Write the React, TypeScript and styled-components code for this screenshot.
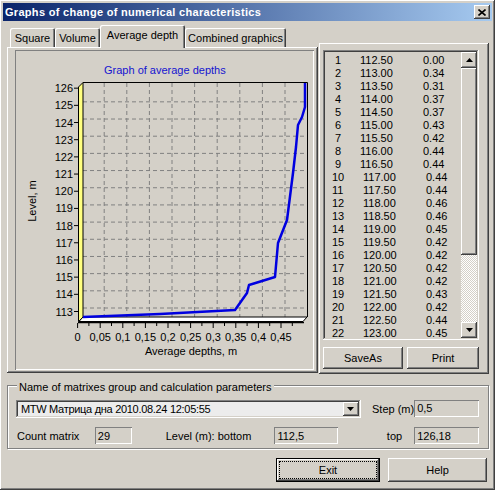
import React from 'react';
import styled, { createGlobalStyle, css } from 'styled-components';

const GlobalStyle = createGlobalStyle`
  body {
    margin: 0;
    background: #d4d0c8;
  }
  * {
    box-sizing: border-box;
  }
`;

const raised = css`
  box-shadow: inset -1px -1px #404040, inset 1px 1px #ffffff,
    inset -2px -2px #808080, inset 2px 2px #d4d0c8;
`;

const sunken = css`
  box-shadow: inset -1px -1px #ffffff, inset 1px 1px #808080,
    inset -2px -2px #d4d0c8, inset 2px 2px #404040;
`;

const Window = styled.div`
  width: 495px;
  height: 490px;
  padding: 3px;
  background: #d4d0c8;
  ${raised};
  display: flex;
  flex-direction: column;
  font-family: 'Liberation Sans', Arial, sans-serif;
  font-size: 11px;
  color: #000;
`;

const TitleBar = styled.div`
  height: 18px;
  display: flex;
  align-items: center;
  justify-content: space-between;
  padding: 0 2px 0 2px;
  background: linear-gradient(to right, #0a246a, #a6caf0);
`;

const TitleText = styled.div`
  color: #fff;
  font-weight: bold;
  font-size: 11px;
  letter-spacing: 0.3px;
`;

const CloseButton = styled.div`
  width: 16px;
  height: 14px;
  background: #d4d0c8;
  ${raised};
  display: flex;
  align-items: center;
  justify-content: center;
`;

const Content = styled.div`
  display: flex;
  margin-top: 4px;
  height: 349px;
`;

const TabControl = styled.div`
  margin-left: 4px;
  width: 311px;
  display: flex;
  flex-direction: column;
`;

const TabStrip = styled.div`
  height: 22px;
  display: flex;
  align-items: flex-end;
  padding-left: 3px;
`;

const Tab = styled.div<{ $active?: boolean; $width: number }>`
  width: ${(p) => p.$width}px;
  height: ${(p) => (p.$active ? 23 : 19)}px;
  margin-bottom: ${(p) => (p.$active ? -1 : 0)}px;
  position: relative;
  z-index: ${(p) => (p.$active ? 2 : 1)};
  background: #d4d0c8;
  border-radius: 2px 2px 0 0;
  box-shadow: inset 1px 1px #ffffff, inset -1px 0 #404040, inset -2px 0 #808080;
  display: flex;
  justify-content: center;
  padding-top: 4px;
  white-space: nowrap;
`;

const Sheet = styled.div`
  height: 326px;
  padding: 3px 4px 3px 8px;
  ${raised};
`;

const ChartPanel = styled.div`
  width: 299px;
  height: 320px;
  box-shadow: inset 1px 1px #808080, inset -1px -1px #ffffff;
`;

const RightPanel = styled.div`
  margin-top: 18px;
  margin-left: 1px;
  width: 170px;
  height: 331px;
  padding: 7px 10px 0 4px;
  ${raised};
`;

const ListBox = styled.div`
  height: 290px;
  padding: 2px;
  ${sunken};
  display: flex;
`;

const Rows = styled.div`
  flex: 1;
  padding-top: 2px;
`;

const Row = styled.div<{ $wide: boolean }>`
  height: 13px;
  line-height: 13px;
  display: grid;
  grid-template-columns: ${(p) => (p.$wide ? '31px 63px auto' : '25px 63px auto')};
  padding-left: ${(p) => (p.$wide ? 7 : 10)}px;
  white-space: nowrap;
`;

const ScrollBar = styled.div`
  width: 16px;
  display: flex;
  flex-direction: column;
`;

const ScrollButton = styled.div<{ $height: number }>`
  height: ${(p) => p.$height}px;
  background: #d4d0c8;
  ${raised};
  display: flex;
  align-items: center;
  justify-content: center;
`;

const ScrollTrack = styled.div`
  flex: 1;
  background: repeating-conic-gradient(#ffffff 0 25%, #d4d0c8 0 50%) 0 0 / 2px 2px;
`;

const ButtonRow = styled.div<{ $gap: number }>`
  display: flex;
  gap: ${(p) => p.$gap}px;
`;

const PanelButtons = styled(ButtonRow)`
  margin-top: 7px;
`;

const Button = styled.div<{ $width: number; $height: number; $default?: boolean }>`
  width: ${(p) => p.$width}px;
  height: ${(p) => p.$height}px;
  background: #d4d0c8;
  display: flex;
  align-items: center;
  justify-content: center;
  font-size: 11px;
  ${(p) =>
    p.$default
      ? css`
          box-shadow: inset 0 0 0 1px #000, inset -2px -2px #404040,
            inset 2px 2px #ffffff, inset -3px -3px #808080;
          outline: 1px dotted #000;
          outline-offset: -4px;
        `
      : raised};
`;

const GroupBox = styled.div`
  position: relative;
  margin: 11px 0 0 4px;
  width: 482px;
  height: 64px;
  padding: 14px 9px 0 8px;
  border: 1px solid #808080;
  box-shadow: inset 1px 1px #ffffff, 1px 1px #ffffff;
`;

const GroupCaption = styled.div`
  position: absolute;
  left: 9px;
  top: -5px;
  padding: 0 2px;
  background: #d4d0c8;
  font-size: 11px;
  line-height: 13px;
`;

const FieldRow = styled.div<{ $top: number }>`
  display: flex;
  align-items: center;
  margin-top: ${(p) => p.$top}px;
`;

const Combo = styled.div`
  width: 346px;
  height: 18px;
  padding: 2px 2px 2px 5px;
  background: #ececec;
  ${sunken};
  display: flex;
  align-items: center;
  justify-content: space-between;
  font-size: 11px;
  letter-spacing: -0.3px;
`;

const ComboButton = styled.div`
  width: 16px;
  height: 14px;
  background: #d4d0c8;
  ${raised};
  display: flex;
  align-items: center;
  justify-content: center;
`;

const Label = styled.div<{ $width?: number; $pad?: number; $right?: boolean }>`
  width: ${(p) => (p.$width ? `${p.$width}px` : 'auto')};
  padding-left: ${(p) => p.$pad ?? 0}px;
  text-align: ${(p) => (p.$right ? 'right' : 'left')};
  font-size: 11px;
  white-space: nowrap;
`;

const Edit = styled.div<{ $width: number; $left?: number }>`
  width: ${(p) => p.$width}px;
  height: 17px;
  margin-left: ${(p) => p.$left ?? 0}px;
  padding: 0 3px;
  box-shadow: inset 1px 1px #808080, inset -1px -1px #ffffff;
  display: flex;
  align-items: center;
  font-size: 11px;
`;

const StepEdit = styled(Edit)`
  margin-left: auto;
  margin-top: -2px;
`;

const Footer = styled(ButtonRow)`
  margin-top: 9px;
  justify-content: flex-end;
  padding-right: 5px;
`;

const depths = [
  '0.00', '0.34', '0.31', '0.37', '0.37', '0.43', '0.42', '0.44', '0.44', '0.44', '0.44',
  '0.46', '0.46', '0.45', '0.42', '0.42', '0.42', '0.42', '0.43', '0.42', '0.44', '0.45',
];

const tabs = [
  { label: 'Square', width: 45 },
  { label: 'Volume', width: 45 },
  { label: 'Average depth', width: 85, active: true },
  { label: 'Combined graphics', width: 101 },
];

const yOf = (v: number) => 308 - (v - 113) * 17.18;
const xOf = (v: number) => 81.6 + 452 * v;

const linePoints = [
  [83, 317], [160, 314], [235, 310], [247, 293], [249, 285], [275, 277], [278, 243],
  [287, 220], [293, 173], [296, 147], [298, 125], [302, 117], [305, 107], [305, 83],
];

const Arrow = ({ down }: { down?: boolean }) => (
  <svg width="7" height="4" viewBox="0 0 7 4">
    <polygon points={down ? '0,0 7,0 3.5,4' : '0,4 7,4 3.5,0'} fill="#000" />
  </svg>
);

const DepthChart = () => {
  const levels = Array.from({ length: 14 }, (_, i) => 113 + i);
  const xs = Array.from({ length: 10 }, (_, i) => i * 0.05);
  return (
    <svg width="299" height="320" viewBox="15 50 299 320" fontFamily="'Liberation Sans', Arial, sans-serif" fontSize="11">
      <text x="104" y="74" fill="#1414d0">Graph of average depths</text>
      {levels.slice(0, 13).map((v) => (
        <line key={v} x1="83" x2="307" y1={yOf(v)} y2={yOf(v)} stroke="#808080" strokeDasharray="4 3" />
      ))}
      {xs.slice(1).map((v) => (
        <line key={v} x1={xOf(v)} x2={xOf(v)} y1="83" y2="317" stroke="#808080" strokeDasharray="4 3" />
      ))}
      <polyline points="83,82.5 307.5,82.5 307.5,317" fill="none" stroke="#000" />
      <polygon points="78.5,87 83,82.5 83,317 78.5,321.5" fill="#ffff80" stroke="#000" strokeWidth="1" />
      <polygon points="83,317 307,317 303,321.5 79,321.5" fill="#fff" stroke="#000" strokeWidth="1" />
      <line x1="78" x2="304" y1="322.5" y2="322.5" stroke="#000" strokeWidth="1.5" />
      <polyline
        points={linePoints.map((p) => p.join(',')).join(' ')}
        fill="none"
        stroke="#0000e0"
        strokeWidth="2.5"
        strokeLinejoin="round"
      />
      {levels.map((v) => (
        <g key={v}>
          <line x1="74" x2="78" y1={yOf(v) + 3.5} y2={yOf(v) + 3.5} stroke="#000" />
          <text x="73" y={yOf(v) + 7.5} textAnchor="end">
            {v}
          </text>
        </g>
      ))}
      {xs.map((v) => (
        <g key={v}>
          <line x1={xOf(v) - 4} x2={xOf(v) - 4} y1="323" y2="328" stroke="#000" />
          <line x1={xOf(v + 0.025) - 4} x2={xOf(v + 0.025) - 4} y1="323" y2="326" stroke="#000" />
          <text x={xOf(v) - 4} y="341" textAnchor="middle">
            {v === 0 ? '0' : String(Math.round(v * 100) / 100).replace('.', ',')}
          </text>
        </g>
      ))}
      <text x="191" y="355" textAnchor="middle">
        Average depths, m
      </text>
      <text x="36" y="201" textAnchor="middle" transform="rotate(-90 36 201)">
        Level, m
      </text>
    </svg>
  );
};

export default function App() {
  return (
    <>
      <GlobalStyle />
      <Window>
        <TitleBar>
          <TitleText>Graphs of change of numerical characteristics</TitleText>
          <CloseButton>
            <svg width="8" height="7" viewBox="0 0 8 7">
              <path d="M0.5 0.5 L7.5 6.5 M7.5 0.5 L0.5 6.5" stroke="#000" strokeWidth="1.6" />
            </svg>
          </CloseButton>
        </TitleBar>
        <Content>
          <TabControl>
            <TabStrip>
              {tabs.map((t) => (
                <Tab key={t.label} $active={t.active} $width={t.width}>
                  {t.label}
                </Tab>
              ))}
            </TabStrip>
            <Sheet>
              <ChartPanel>
                <DepthChart />
              </ChartPanel>
            </Sheet>
          </TabControl>
          <RightPanel>
            <ListBox>
              <Rows>
                {depths.map((d, i) => (
                  <Row key={i} $wide={i >= 9}>
                    <span>{i + 1}</span>
                    <span>{(112.5 + i * 0.5).toFixed(2)}</span>
                    <span>{d}</span>
                  </Row>
                ))}
              </Rows>
              <ScrollBar>
                <ScrollButton $height={16}>
                  <Arrow />
                </ScrollButton>
                <ScrollButton $height={187} />
                <ScrollTrack />
                <ScrollButton $height={16}>
                  <Arrow down />
                </ScrollButton>
              </ScrollBar>
            </ListBox>
            <PanelButtons $gap={4}>
              <Button $width={80} $height={22}>SaveAs</Button>
              <Button $width={72} $height={22}>Print</Button>
            </PanelButtons>
          </RightPanel>
        </Content>
        <GroupBox>
          <GroupCaption>Name of matrixes group and calculation parameters</GroupCaption>
          <FieldRow $top={0}>
            <Combo>
              <span>MTW Матрица дна 2010.08.24 12:05:55</span>
              <ComboButton>
                <Arrow down />
              </ComboButton>
            </Combo>
            <Label $pad={11}>Step (m)</Label>
            <StepEdit $width={65}>0,5</StepEdit>
          </FieldRow>
          <FieldRow $top={9}>
            <Label $width={79} $pad={1}>Count matrix</Label>
            <Edit $width={37}>29</Edit>
            <Label $width={143} $pad={34}>Level (m): bottom</Label>
            <Edit $width={64}>112,5</Edit>
            <Label $width={64} $right>top</Label>
            <Edit $width={65} $left={12}>126,18</Edit>
          </FieldRow>
        </GroupBox>
        <Footer $gap={8}>
          <Button $width={104} $height={24} $default>Exit</Button>
          <Button $width={99} $height={24}>Help</Button>
        </Footer>
      </Window>
    </>
  );
}
